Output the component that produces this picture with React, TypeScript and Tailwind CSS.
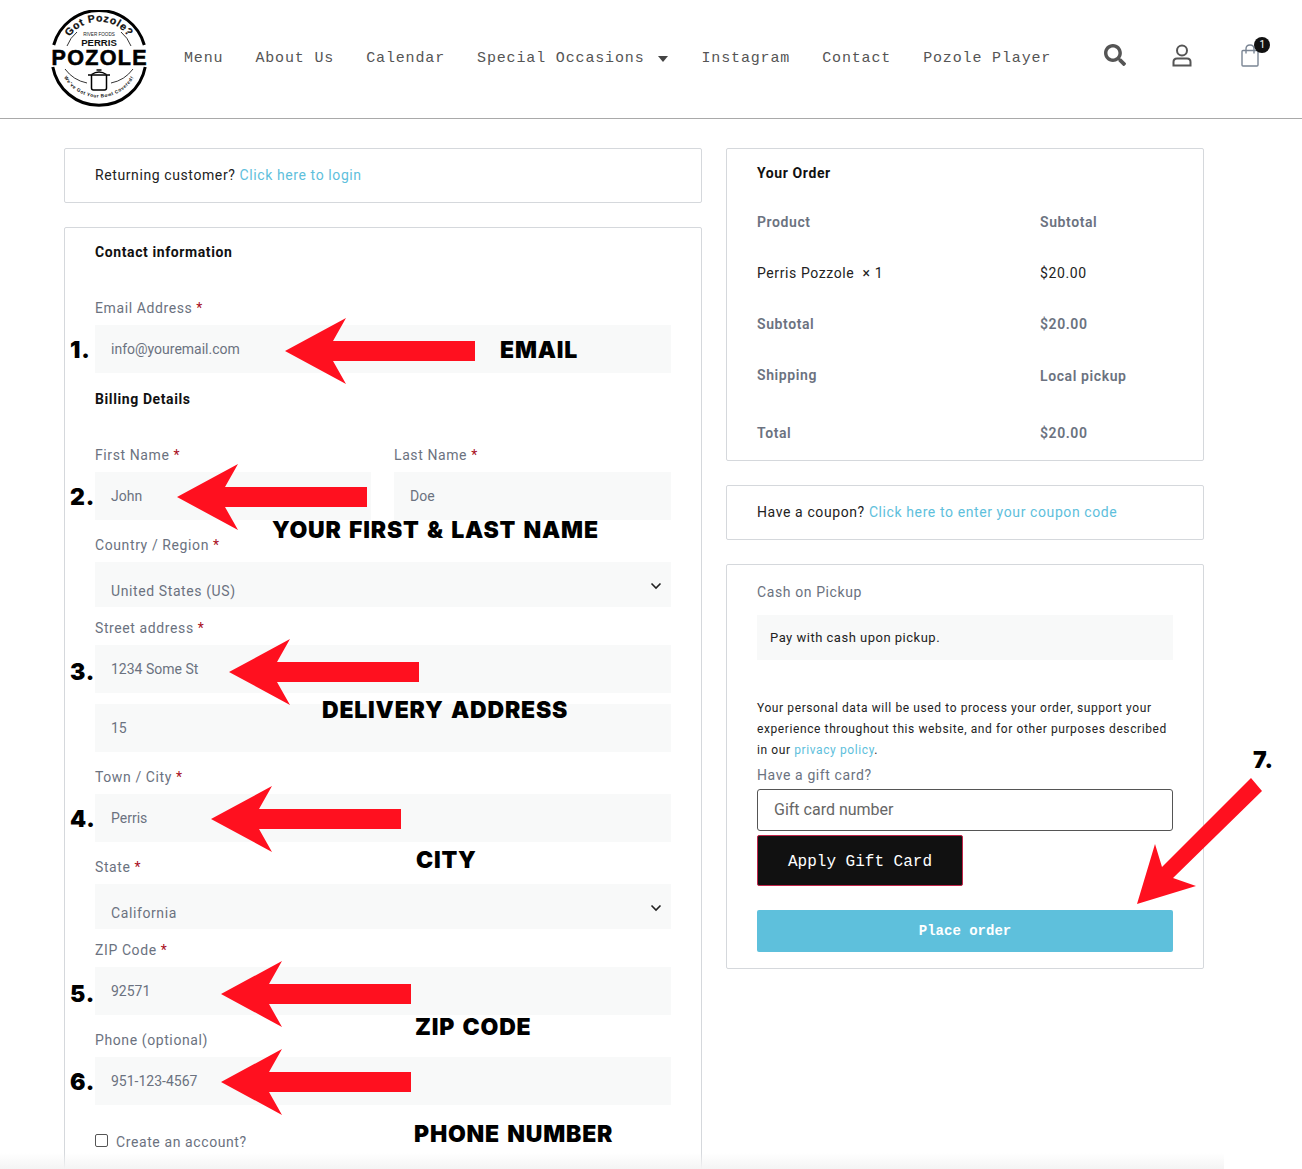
import React from 'react';
import { FaSearch } from 'react-icons/fa';

const navItems = ['Menu', 'About Us', 'Calendar', 'Special Occasions', 'Instagram', 'Contact', 'Pozole Player'];

const Logo = () => (
  <svg width="100" height="98" viewBox="0 0 100 98" className="shrink-0">
    <defs>
      <path id="logo-top" d="M 16.2 35.2 A 36 36 0 0 1 83.8 35.2" />
      <path id="logo-bottom" d="M 13.7 64.4 A 40 40 0 0 0 86.3 64.4" />
    </defs>
    <path d="M 4.7 35 A 47 47 0 0 1 95.3 35" fill="none" stroke="#000" strokeWidth="3" />
    <path d="M 3.8 57 A 47 47 0 0 0 96.2 57" fill="none" stroke="#000" strokeWidth="3" />
    <text fontFamily="Liberation Sans" fontWeight="700" fontSize="10.5" fill="#111" stroke="#111" strokeWidth="0.25" letterSpacing="0.7">
      <textPath href="#logo-top" startOffset="50%" textAnchor="middle">Got Pozole?</textPath>
    </text>
    <path d="M 18 36 A 34 34 0 0 1 28 22" fill="none" stroke="#000" strokeWidth="0.8" />
    <path d="M 82 36 A 34 34 0 0 0 72 22" fill="none" stroke="#000" strokeWidth="0.8" />
    <text x="50" y="26" textAnchor="middle" fontFamily="Liberation Sans" fontSize="4.6" fill="#222">RIVER FOODS</text>
    <text x="50" y="35.5" textAnchor="middle" fontFamily="Liberation Sans" fontWeight="700" fontSize="9.6" fill="#111">PERRIS</text>
    <text x="2.5" y="55" textLength="95" lengthAdjust="spacing" fontFamily="Liberation Sans" fontWeight="700" fontSize="21.5" fill="#000" stroke="#000" strokeWidth="0.6">POZOLE</text>
    <path d="M 16 59 A 36 36 0 0 0 38 73" fill="none" stroke="#000" strokeWidth="0.8" />
    <path d="M 84 59 A 36 36 0 0 1 62 73" fill="none" stroke="#000" strokeWidth="0.8" />
    <g fill="none" stroke="#000" strokeWidth="1.5">
      <path d="M 42.5 65 V 78 Q 42.5 80 44.5 80 H 55.5 Q 57.5 80 57.5 78 V 65" />
      <path d="M 39 65 H 61" />
      <path d="M 42.5 64.5 Q 50 59.5 57.5 64.5" />
      <path d="M 47.5 60 H 52.5" />
    </g>
    <text fontFamily="Liberation Sans" fontWeight="700" fontSize="4.8" fill="#111" letterSpacing="0.5">
      <textPath href="#logo-bottom" startOffset="50%" textAnchor="middle">We've Got Your Bowl Covered!</textPath>
    </text>
  </svg>
);

const Label = ({ text, required = true, className = '' }: { text: string; required?: boolean; className?: string }) => (
  <div className={`h-5 text-[14px] leading-5 tracking-[0.6px] text-[#6b7280] ${className}`}>
    {text}
    {required && <span className="ml-1 text-[#a80e22]">*</span>}
  </div>
);

const Input = ({ value, className = '' }: { value: string; className?: string }) => (
  <div className={`flex h-12 items-center bg-[#f8f9f9] px-4 text-[14px] text-[#6b7280] ${className}`}>{value}</div>
);

const Select = ({ value }: { value: string }) => (
  <div className="flex h-[45px] items-end justify-between bg-[#f8f9f9] pb-[6px] pl-4 pr-[9px] text-[14px] leading-5 tracking-[0.6px] text-[#6b7280]">
    <span>{value}</span>
    <svg width="12" height="12" viewBox="0 0 12 12" className="mb-[9px]">
      <path d="M 1.5 3.5 L 6 8 L 10.5 3.5" fill="none" stroke="#222" strokeWidth="1.6" />
    </svg>
  </div>
);

const Card = ({ children, className = '' }: { children: React.ReactNode; className?: string }) => (
  <div className={`rounded-[2px] border border-[#d5d8dc] bg-white ${className}`}>{children}</div>
);

const orderRows = [
  { left: 'Product', right: 'Subtotal', strong: true, nudge: '' },
  { left: 'Perris Pozzole  × 1', right: '$20.00', strong: false, nudge: '' },
  { left: 'Subtotal', right: '$20.00', strong: true, nudge: '' },
  { left: 'Shipping', right: 'Local pickup', strong: true, nudge: 'pt-[2px]' },
];

// red arrows and captions drawn over the screenshot
const Arrow = ({ className }: { className: string }) => (
  <svg width="190" height="66" viewBox="0 0 190 66" className={`absolute ${className}`}>
    <path d="M 0 33 L 61 0 L 48 23 H 190 V 43 H 48 L 61 66 Z" fill="#ff101f" />
  </svg>
);

const Note = ({ children, className }: { children: React.ReactNode; className: string }) => (
  <div className={`absolute whitespace-nowrap font-['Inter',sans-serif] text-[23px] font-black leading-none tracking-[0.8px] text-black [word-spacing:2px] ${className}`}>
    {children}
  </div>
);

const Annotations = () => (
  <>
    <Arrow className="left-[285px] top-[318px]" />
    <Arrow className="left-[177px] top-[464px]" />
    <Arrow className="left-[229px] top-[639px]" />
    <Arrow className="left-[211px] top-[786px]" />
    <Arrow className="left-[221px] top-[961px]" />
    <Arrow className="left-[221px] top-[1049px]" />
    <svg width="140" height="135" viewBox="0 0 140 135" className="absolute left-[1130px] top-[775px]">
      <path d="M 7 129 L 25 69 L 32 92 L 121 3 L 132 16 L 43 103 L 66 111 Z" fill="#ff101f" />
    </svg>
    <Note className="left-[70px] top-[339px]">1.</Note>
    <Note className="left-[70px] top-[486px]">2.</Note>
    <Note className="left-[70px] top-[661px]">3.</Note>
    <Note className="left-[70px] top-[808px]">4.</Note>
    <Note className="left-[70px] top-[983px]">5.</Note>
    <Note className="left-[70px] top-[1071px]">6.</Note>
    <Note className="left-[1253px] top-[749px]">7.</Note>
    <Note className="left-[500px] top-[339px]">EMAIL</Note>
    <Note className="left-[272px] top-[519px]">YOUR FIRST &amp; LAST NAME</Note>
    <Note className="left-[322px] top-[699px]">DELIVERY ADDRESS</Note>
    <Note className="left-[416px] top-[849px]">CITY</Note>
    <Note className="left-[415px] top-[1016px]">ZIP CODE</Note>
    <Note className="left-[414px] top-[1123px]">PHONE NUMBER</Note>
  </>
);

export default function App() {
  return (
    <div className="relative h-[1169px] overflow-hidden bg-white font-['Roboto',sans-serif]">
      {/* Header */}
      <header className="flex h-[119px] items-center border-b border-[#a9a9a9] pl-[49px]">
        <Logo />
        <nav className="ml-[35px] flex items-center gap-[32px] font-['Liberation_Mono',monospace] text-[15px] tracking-[0.85px] text-[#555]">
          {navItems.map((item) => (
            <span key={item} className="flex items-center whitespace-nowrap">
              {item}
              {item === 'Special Occasions' && (
                <svg width="10" height="6" viewBox="0 0 10 6" className="ml-[13px] mr-[2px]">
                  <path d="M 0 0 H 10 L 5 6 Z" fill="#444" />
                </svg>
              )}
            </span>
          ))}
        </nav>
        <div className="mb-2 ml-[53px] flex items-center">
          <FaSearch className="h-[22px] w-[22px] text-[#555]" />
          <svg width="20" height="23" viewBox="0 0 20 23" className="ml-[46px]" fill="none" stroke="#555" strokeWidth="2">
            <circle cx="10" cy="6.5" r="5" />
            <path d="M 1.5 21.5 V 18 Q 1.5 14.5 5 14.5 H 15 Q 18.5 14.5 18.5 18 V 21.5 Z" />
          </svg>
          <div className="relative ml-[49px]">
            <svg width="18" height="23" viewBox="0 0 18 23" fill="none" stroke="#7a8594" strokeWidth="1.4">
              <rect x="1" y="6.5" width="16" height="15.5" rx="1" />
              <path d="M 5 9.5 V 5 Q 5 1 9 1 Q 13 1 13 5 V 9.5" />
            </svg>
            <span className="absolute -right-[11px] -top-[7px] flex h-4 w-4 items-center justify-center rounded-full bg-[#111] text-[10px] leading-none text-white">1</span>
          </div>
        </div>
      </header>

      <main className="ml-[64px] mt-[29px] flex w-[1140px] items-start gap-[24px]">
        {/* Left column */}
        <div className="w-[638px] shrink-0">
          <Card className="flex h-[55px] items-center px-[30px] text-[14px] tracking-[0.6px] text-[#222]">
            Returning customer?&nbsp;<span className="text-[#5ec0dc]">Click here to login</span>
          </Card>

          <Card className="mt-[24px] h-[1000px] px-[30px] pt-[14px]">
            <div className="h-5 text-[14px] font-bold leading-5 tracking-[0.6px] text-[#111]">Contact information</div>
            <Label text="Email Address" className="mb-[7px] mt-[36px]" />
            <Input value="info@youremail.com" />
            <div className="mt-4 h-5 text-[14px] font-bold leading-5 tracking-[0.6px] text-[#111]">Billing Details</div>
            <div className="mt-[36px] grid grid-cols-[276px_277px] gap-x-[23px]">
              <div>
                <Label text="First Name" className="mb-[7px]" />
                <Input value="John" />
              </div>
              <div>
                <Label text="Last Name" className="mb-[7px]" />
                <Input value="Doe" />
              </div>
            </div>
            <Label text="Country / Region" className="mb-[7px] mt-[15px]" />
            <Select value="United States (US)" />
            <Label text="Street address" className="mb-[7px] mt-[11px]" />
            <Input value="1234 Some St" />
            <Input value="15" className="mt-[11px]" />
            <Label text="Town / City" className="mb-[7px] mt-[15px]" />
            <Input value="Perris" />
            <Label text="State" className="mb-[7px] mt-[15px]" />
            <Select value="California" />
            <Label text="ZIP Code" className="mb-[7px] mt-[11px]" />
            <Input value="92571" />
            <Label text="Phone (optional)" required={false} className="mb-[7px] mt-[15px]" />
            <Input value="951-123-4567" />
            <div className="mt-[27px] flex h-5 items-center text-[14px] tracking-[0.6px] text-[#6b7280]">
              <span className="-mt-[3px] mr-[8px] h-[13px] w-[13px] rounded-[2px] border border-[#555] bg-white" />
              Create an account?
            </div>
          </Card>
        </div>

        {/* Right column */}
        <div className="w-[478px] shrink-0">
          <Card className="h-[313px] px-[30px] pt-[14px] text-[14px] tracking-[0.6px]">
            <div className="h-5 font-bold leading-5 text-[#111]">Your Order</div>
            <div className="mt-[14px]">
              {orderRows.map((row) => (
                <div key={row.left} className={`grid h-[51px] grid-cols-[283px_1fr] items-center ${row.strong ? 'font-semibold text-[#6b7280]' : 'text-[#222]'}`}>
                  <span className="whitespace-pre">{row.left}</span>
                  <span className={row.nudge}>{row.right}</span>
                </div>
              ))}
              <div className="grid grid-cols-[283px_1fr] pt-[22px] font-semibold leading-5 text-[#6b7280]">
                <span>Total</span>
                <span>$20.00</span>
              </div>
            </div>
          </Card>

          <Card className="mt-[24px] flex h-[55px] items-center px-[30px] text-[14px] tracking-[0.6px] text-[#222]">
            Have a coupon?&nbsp;<span className="text-[#5ec0dc]">Click here to enter your coupon code</span>
          </Card>

          <Card className="mt-[24px] h-[405px] px-[30px] pt-[17px]">
            <div className="h-5 text-[14px] leading-5 tracking-[0.6px] text-[#6b7280]">Cash on Pickup</div>
            <div className="mt-[13px] flex h-[45px] items-center bg-[#f8f9f9] px-[13px] text-[13px] tracking-[0.5px] text-[#222]">
              Pay with cash upon pickup.
            </div>
            <p className="mt-[38px] text-[12px] leading-[21px] tracking-[0.6px] text-[#222]">
              Your personal data will be used to process your order, support your experience throughout this website, and for other purposes described in our <span className="text-[#5ec0dc]">privacy policy</span>.
            </p>
            <div className="mt-[4px] h-5 text-[14px] leading-5 tracking-[0.6px] text-[#6b7280]">Have a gift card?</div>
            <div className="mt-[4px] flex h-[42px] items-center rounded-[3px] border border-[#555] px-4 text-[16px] text-[#666]">Gift card number</div>
            <button className="mt-[4px] block h-[51px] w-[206px] rounded-[2px] border border-[#c2254a] bg-[#111] pt-[2px] font-['Liberation_Mono',monospace] text-[16px] text-white">
              Apply Gift Card
            </button>
            <button className="mt-[24px] block h-[42px] w-full rounded-[2px] bg-[#5ec0dc] pt-[1px] font-['Liberation_Mono',monospace] text-[14px] font-bold text-white">
              Place order
            </button>
          </Card>
        </div>
      </main>

      <Annotations />

      {/* faint fade at the bottom edge of the capture */}
      <div className="pointer-events-none absolute bottom-0 left-0 h-[16px] w-[1224px] bg-gradient-to-b from-transparent to-[#f4f4f4]" />
    </div>
  );
}
